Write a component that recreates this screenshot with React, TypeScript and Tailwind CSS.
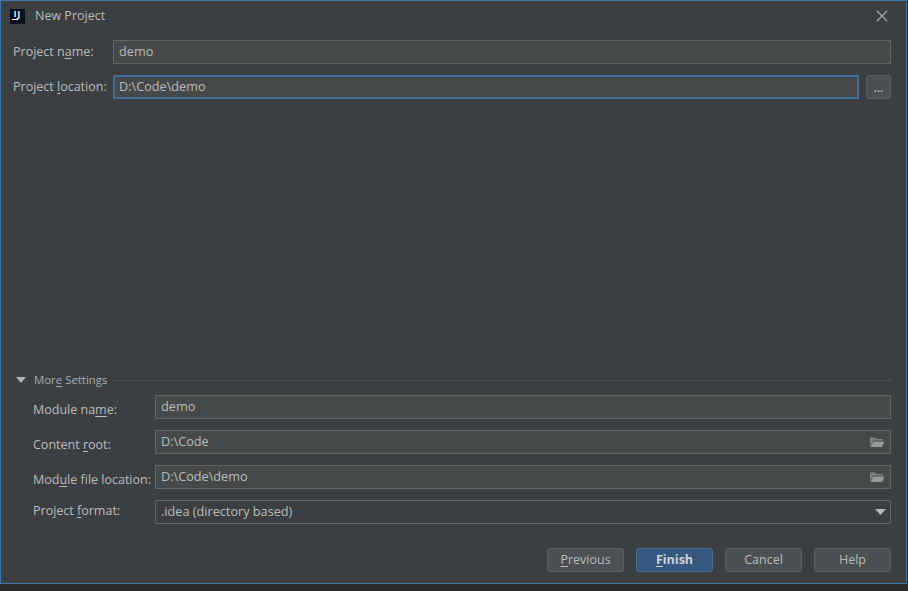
import React from 'react';

const FONT = "font-['Open_Sans',sans-serif]";

const Mn = ({ children }: { children: React.ReactNode }) => <span className="underline underline-offset-2">{children}</span>;

const FolderIcon = () => (
  <svg width="16" height="14" viewBox="0 0 16 14" className="shrink-0">
    <path d="M1 2.5h5l1.5 1.5H14v1.5H4L1 12z" fill="#7f8284" />
    <path d="M4.2 6.5H15.5L13 12H1.5z" fill="#96989a" />
  </svg>
);

const Field = ({ value, children }: { value: string; children?: React.ReactNode }) => (
  <div className="flex-1 h-[24px] bg-[#45494a] border border-[#646464] flex items-center justify-between pl-[5px] pr-[5px] text-[12.7px] text-[#bbbbbb]">
    <span>{value}</span>
    {children}
  </div>
);

const Row = ({ label, labelClass, children }: { label: React.ReactNode; labelClass: string; children: React.ReactNode }) => (
  <div className="flex items-center h-[24px]">
    <div className={`${labelClass} shrink-0 text-[12.5px] leading-[16px] text-[#bbbbbb] whitespace-nowrap`}>{label}</div>
    {children}
  </div>
);

const Btn = ({ children, primary }: { children: React.ReactNode; primary?: boolean }) => (
  <div
    className={`w-[77px] h-[24px] pt-px rounded-[3px] border flex items-center justify-center text-[12.5px] ${
      primary ? 'bg-[#365880] border-[#4c708c] text-[#d0d4d8] font-bold' : 'bg-[#4c5052] border-[#5e6060] text-[#bbbbbb]'
    }`}
  >
    {children}
  </div>
);

export default function App() {
  return (
    <div className={`w-[908px] h-[591px] bg-[#2b2b2b] overflow-hidden ${FONT}`}>
      <div className="w-[907px] h-[584px] bg-[#3c3f41] border border-[#3b75a8] flex flex-col">
        {/* title bar */}
        <div className="h-[30px] flex items-center pl-[9px] pr-[18px] shrink-0">
          <div className="w-[15px] h-[15px] bg-[#0a0f1e] flex flex-col items-center justify-start shrink-0">
            <span className="text-[8px] leading-[9px] font-bold tracking-[1px] text-white">IJ</span>
            <span className="w-[6px] h-px bg-white mt-px self-start ml-[2px]" />
          </div>
          <span className="ml-[10px] text-[12.5px] text-[#bbbbbb]">New Project</span>
          <svg width="12" height="12" viewBox="0 0 12 12" className="ml-auto">
            <path d="M1 1l10 10M11 1L1 11" stroke="#a9abad" strokeWidth="1.2" />
          </svg>
        </div>

        {/* project */}
        <div className="pl-[12px] pr-[15px] pt-[9px] flex flex-col gap-[11px]">
          <Row label={<>Project n<Mn>a</Mn>me:</>} labelClass="w-[100px]">
            <Field value="demo" />
          </Row>
          <Row label={<>Project <Mn>l</Mn>ocation:</>} labelClass="w-[100px]">
            <div className="flex-1 h-[24px] pb-px bg-[#45494a] border-2 border-[#3d6f9e] flex items-center pl-[4px] text-[12.7px] text-[#bbbbbb]">
              D:\Code\demo
            </div>
            <div className="ml-[7px] w-[25px] h-[24px] rounded-[3px] bg-[#4c5052] border border-[#5e6060] flex items-center justify-center text-[11px] leading-none font-bold text-[#bbbbbb]">
              ...
            </div>
          </Row>
        </div>

        {/* more settings */}
        <div className="mt-auto pl-[15px] pr-[15px]">
          <div className="flex items-center h-[16px]">
            <svg width="10" height="6" viewBox="0 0 10 6" className="shrink-0">
              <path d="M0 0h10L5 6z" fill="#b4b6b8" />
            </svg>
            <span className="ml-[8px] text-[11.4px] text-[#a8aaac]">Mor<Mn>e</Mn> Settings</span>
            <div className="ml-[5px] flex-1 h-px bg-[#505254]" />
          </div>
          <div className="pl-[17px] pt-[7px] flex flex-col gap-[11px]">
            <Row label={<>Module na<Mn>m</Mn>e:</>} labelClass="w-[122px] pt-[6px]">
              <Field value="demo" />
            </Row>
            <Row label={<>Content <Mn>r</Mn>oot:</>} labelClass="w-[122px] pt-[6px]">
              <Field value="D:\Code"><FolderIcon /></Field>
            </Row>
            <Row label={<>Mod<Mn>u</Mn>le file location:</>} labelClass="w-[122px] pt-[6px]">
              <Field value="D:\Code\demo"><FolderIcon /></Field>
            </Row>
            <Row label={<>Project <Mn>f</Mn>ormat:</>} labelClass="w-[122px] pb-[2px]">
              <div className="flex-1 h-[24px] bg-[#3c3f41] border border-[#646464] rounded-[2px] flex items-center justify-between pl-[5px] pr-[4px] text-[12.7px] text-[#bbbbbb]">
                <span>.idea (directory based)</span>
                <svg width="11" height="6" viewBox="0 0 11 6">
                  <path d="M0 0h11L5.5 6z" fill="#b4b6b8" />
                </svg>
              </div>
            </Row>
          </div>
        </div>

        {/* buttons */}
        <div className="h-[59px] shrink-0 flex items-start justify-end gap-[12px] pt-[24px] pr-[15px]">
          <Btn><Mn>P</Mn>revious</Btn>
          <Btn primary><Mn>F</Mn>inish</Btn>
          <Btn>Cancel</Btn>
          <Btn>Help</Btn>
        </div>
      </div>
    </div>
  );
}
